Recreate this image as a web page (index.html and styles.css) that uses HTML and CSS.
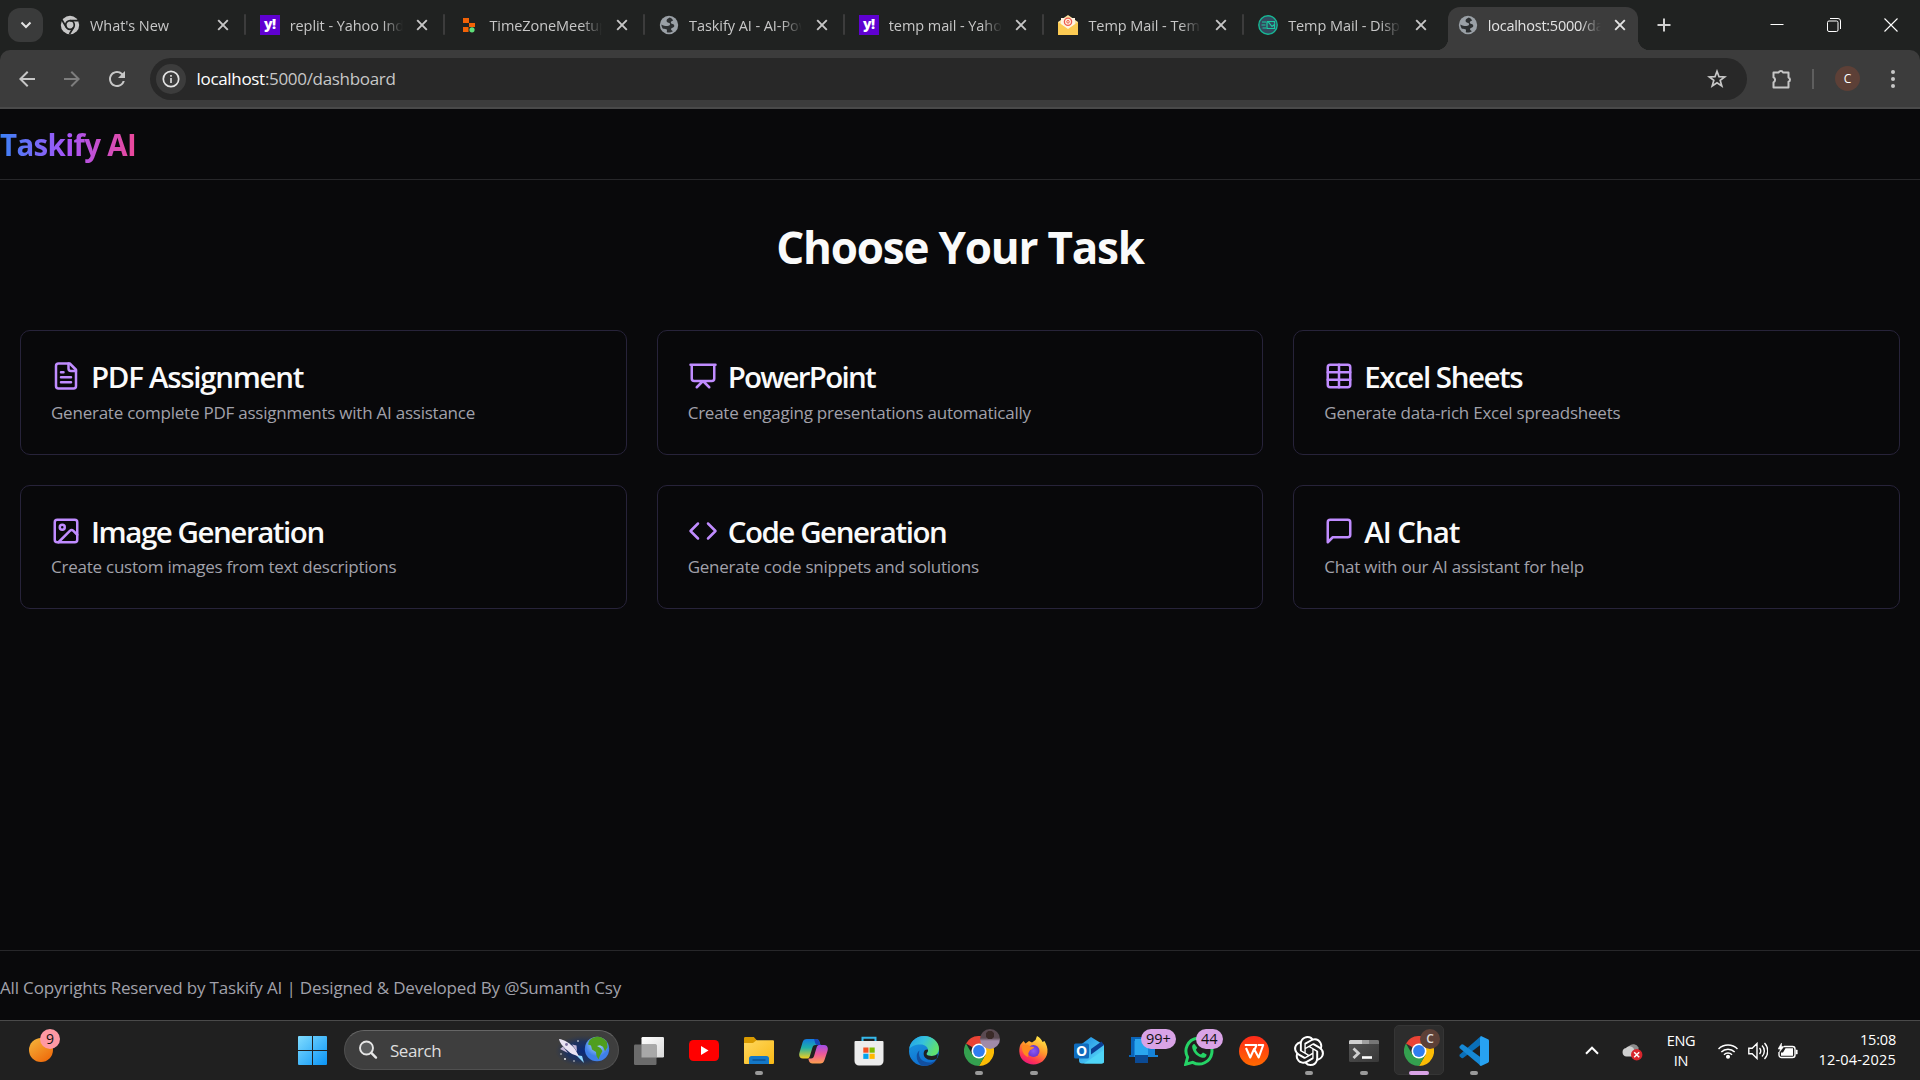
FILE: index.html
```html
<!DOCTYPE html>
<html lang="en">
<head>
<meta charset="utf-8">
<title>Taskify AI</title>
<link rel="stylesheet" href="styles.css">
</head>
<body>
<svg class="defs" aria-hidden="true">
  <defs>
    <linearGradient id="gWin" x1="0" y1="0" x2="1" y2="1"><stop offset="0" stop-color="#80dcff"/><stop offset="1" stop-color="#0a94f5"/></linearGradient>
    <linearGradient id="gOrange" x1="0" y1="0" x2=".7" y2="1"><stop offset="0" stop-color="#f5b83d"/><stop offset="1" stop-color="#ef6c0c"/></linearGradient>
    <linearGradient id="gFolder" x1="0" y1="0" x2="1" y2="1"><stop offset="0" stop-color="#ffd75e"/><stop offset="1" stop-color="#f9b915"/></linearGradient>
    <linearGradient id="gCopA" x1="0" y1="0" x2="0" y2="1"><stop offset="0" stop-color="#1279e0"/><stop offset=".45" stop-color="#1fb1a8"/><stop offset="1" stop-color="#f3cf1e"/></linearGradient>
    <linearGradient id="gCopB" x1="0" y1="0" x2="0" y2="1"><stop offset="0" stop-color="#a04de8"/><stop offset=".5" stop-color="#ee5a98"/><stop offset="1" stop-color="#fda04e"/></linearGradient>
    <linearGradient id="gEdgeTop" x1="0" y1="0" x2="1" y2=".4"><stop offset="0" stop-color="#1f9ee8"/><stop offset=".5" stop-color="#35c1dd"/><stop offset="1" stop-color="#5fe070"/></linearGradient>
    <linearGradient id="gEdge" x1="0" y1="0" x2=".4" y2="1"><stop offset="0" stop-color="#1b9de2"/><stop offset="1" stop-color="#0f6fd0"/></linearGradient>
    <linearGradient id="gFox" x1=".8" y1="0" x2=".3" y2="1"><stop offset="0" stop-color="#fff04a"/><stop offset=".45" stop-color="#ff9a2b"/><stop offset=".8" stop-color="#ff3750"/><stop offset="1" stop-color="#e8157e"/></linearGradient>
    <radialGradient id="gFoxIn"><stop offset="0" stop-color="#8b5cf6"/><stop offset="1" stop-color="#6a35d0"/></radialGradient>
    <linearGradient id="gOut" x1="0" y1="0" x2="1" y2="1"><stop offset="0" stop-color="#1b86e0"/><stop offset="1" stop-color="#5fe3fb"/></linearGradient>
    <linearGradient id="gWps" x1="0" y1="0" x2="0" y2="1"><stop offset="0" stop-color="#ff2a1a"/><stop offset="1" stop-color="#ff6a00"/></linearGradient>
    <linearGradient id="gTerm" x1="0" y1="0" x2="1" y2="1"><stop offset="0" stop-color="#555"/><stop offset="1" stop-color="#383838"/></linearGradient>
    <radialGradient id="gEarth" cx=".5" cy=".3"><stop offset="0" stop-color="#b7e0ff"/><stop offset="1" stop-color="#3f7fe8"/></radialGradient>
    <radialGradient id="gSpace"><stop offset="0" stop-color="#0b2a7a"/><stop offset=".6" stop-color="#173064" stop-opacity=".8"/><stop offset="1" stop-color="#2a3550" stop-opacity="0"/></radialGradient>
  </defs>
  <symbol id="i-close" viewBox="0 0 12 12"><path d="M1.200 1.200l9.600 9.600M10.800 1.200l-9.600 9.600" stroke="currentColor" stroke-width="1.900"/></symbol>
  <symbol id="i-globe" viewBox="0 0 20 20"><circle cx="10" cy="10" r="9.200" fill="#9aa0a6"/><path d="M10.800 2.600C8.900 3.400 7.200 4.600 7.600 6.200c.5 1.600 3.400 1.200 3.500 2.800.1 1.300-1.200 1.900-2.600 2-1.900.1-4.100-.4-6.100-1.500.1 1.700.6 3 1.500 4.200 1.400.3 3.300.1 3.900.9.500.8-.2 1.700.1 2.700 2 .5 4.400.2 6-1.100-.7-.8-2-1-1.900-2.200.2-1.200 2.700-1.300 3.200-2.600.4-1.300-.6-2-1.700-2.300-1.200-.4-2-1.100-1.500-2.300.3-.8 1.500-1 2.200-1.400-.9-1.300-2.100-2.300-3.400-2.800z" fill="#26292a" opacity=".95"/></symbol>
  <symbol id="i-chrome" viewBox="0 0 30 30">
    <path d="M15 15L2 7.500A15 15 0 0 1 28 7.500H15z" fill="#ea4335"/>
    <path d="M28 7.500A15 15 0 0 1 15 30L21.500 18.750L15 7.500z" fill="#fbbc05"/>
    <path d="M2 7.500A15 15 0 0 0 15 30L21.500 18.750L8.500 18.750z" fill="#34a04f"/>
    <circle cx="15" cy="15" r="7.500" fill="#fff"/><circle cx="15" cy="15" r="5.900" fill="#2f7df0"/>
  </symbol>
</svg>

<header class="browser">
  <div class="tabstrip">
    <button class="tab-search"><svg width="12" height="8" viewBox="0 0 12 8"><path d="M1.500 1.500L6 6l4.500-4.500" fill="none" stroke="#e3e3e3" stroke-width="2"/></svg></button>
    <div class="tabs">
      <div class="tab"><svg class="fav" viewBox="0 0 20 20"><circle cx="10" cy="10" r="9.200" fill="#c7c7c7"/><circle cx="10" cy="10" r="4.300" fill="none" stroke="#202221" stroke-width="1.700"/><path d="M10 5.700h8.500M6.300 12.200L2 5M13.700 12.200L9.500 19" stroke="#202221" stroke-width="1.700"/></svg><span class="tab-title">What's New</span><svg class="x"><use href="#i-close"/></svg></div>
      <div class="tab"><span class="fav yahoo">y!</span><span class="tab-title">replit - Yahoo India</span><svg class="x"><use href="#i-close"/></svg></div>
      <div class="tab"><svg class="fav" viewBox="0 0 20 20"><path d="M4 3h6v5H4zM10 8h6v4h-6zM4 12h5.500v5H4z" fill="#f26207"/><circle cx="13" cy="14.800" r="2.600" fill="#5fe07a"/></svg><span class="tab-title">TimeZoneMeetup</span><svg class="x"><use href="#i-close"/></svg></div>
      <div class="tab"><svg class="fav"><use href="#i-globe"/></svg><span class="tab-title">Taskify AI - AI-Powered</span><svg class="x"><use href="#i-close"/></svg></div>
      <div class="tab"><span class="fav yahoo">y!</span><span class="tab-title">temp mail - Yahoo</span><svg class="x"><use href="#i-close"/></svg></div>
      <div class="tab"><svg class="fav" viewBox="0 0 20 20"><path d="M0 7L10 0l10 7v13H0z" fill="#fbe3a0"/><path d="M3 3h14v8l-7 5-7-5z" fill="#fff3e0"/><path d="M0 7l10 7 10-7v13H0z" fill="#fccb53"/><circle cx="10" cy="6.800" r="3.600" fill="none" stroke="#ef5b4c" stroke-width="1.300"/><circle cx="10" cy="6.800" r="1.300" fill="none" stroke="#ef5b4c"/></svg><span class="tab-title">Temp Mail - Temporary</span><svg class="x"><use href="#i-close"/></svg></div>
      <div class="tab"><svg class="fav" viewBox="0 0 20 20"><circle cx="10" cy="10" r="9.200" fill="#34495e" stroke="#17b794" stroke-width="1.400"/><path d="M4 7h4M3.500 10h4M4.500 13h3.500M9 6.500v7h7.500V9.500l-2.500 2-4-5h6.500v2" fill="none" stroke="#1cc9a0" stroke-width="1.200"/></svg><span class="tab-title">Temp Mail - Disposable</span><svg class="x"><use href="#i-close"/></svg></div>
      <div class="tab active"><svg class="fav"><use href="#i-globe"/></svg><span class="tab-title">localhost:5000/dashboard</span><svg class="x"><use href="#i-close"/></svg></div>
    </div>
    <button class="new-tab"><svg width="14" height="14" viewBox="0 0 14 14"><path d="M7 .500v13M.500 7h13" stroke="#d0d0d0" stroke-width="2"/></svg></button>
    <div class="win-controls">
      <svg width="14" height="14" viewBox="0 0 14 14"><path d="M.500 6.500h13" stroke="#fff"/></svg>
      <svg width="14" height="14" viewBox="0 0 14 14" fill="none" stroke="#fff"><rect x=".500" y="3" width="10.500" height="10.500" rx="1.500"/><path d="M3 .500h8a2.500 2.500 0 0 1 2.500 2.500v8"/></svg>
      <svg width="14" height="14" viewBox="0 0 14 14"><path d="M.500 .500l13 13M13.500 .500l-13 13" stroke="#fff" stroke-width="1.100"/></svg>
    </div>
  </div>
  <div class="toolbar">
    <nav class="nav-buttons">
      <svg width="24" height="24" viewBox="0 0 24 24" fill="#c7c7c7"><path d="M20 11H7.830l5.590-5.590L12 4l-8 8 8 8 1.410-1.410L7.830 13H20v-2z"/></svg>
      <svg width="24" height="24" viewBox="0 0 24 24" fill="#7d7d7d"><path d="M4 11h12.170l-5.590-5.590L12 4l8 8-8 8-1.410-1.410L16.170 13H4v-2z"/></svg>
      <svg width="24" height="24" viewBox="0 0 24 24" fill="#c7c7c7"><path d="M17.650 6.350A7.958 7.958 0 0 0 12 4c-4.420 0-7.990 3.580-7.990 8s3.570 8 7.990 8c3.730 0 6.840-2.550 7.730-6h-2.080A5.990 5.990 0 0 1 12 18c-3.310 0-6-2.690-6-6s2.690-6 6-6c1.660 0 3.140.69 4.220 1.780L13 11h7V4l-2.350 2.350z"/></svg>
    </nav>
    <div class="omnibox">
      <span class="site-info"><svg width="18" height="18" viewBox="0 0 18 18"><circle cx="9" cy="9" r="7.700" fill="none" stroke="#e3e3e3" stroke-width="1.700"/><path d="M9 8v5M9 5v1.800" stroke="#e3e3e3" stroke-width="1.600"/></svg></span>
      <span class="url"><b>localhost</b>:5000/dashboard</span>
      <svg class="star" width="20" height="20" viewBox="0 0 20 20"><path d="M10 2.300l2 5.400 5.700.200-4.500 3.500 1.600 5.600-4.800-3.300L5.200 17l1.600-5.600L2.300 7.900l5.700-.200z" fill="none" stroke="#c7c7c7" stroke-width="1.700"/></svg>
    </div>
    <div class="actions">
      <svg width="22" height="22" viewBox="0 0 22 22"><path d="M2.500 4.500h5.200a2.300 2.300 0 0 1 4.300 0h5.500v5a2.300 2.300 0 0 1 0 4.300v5.700h-15v-5.200a2.700 2.700 0 0 0 0-4.900z" fill="none" stroke="#c7c7c7" stroke-width="2" stroke-linejoin="round"/></svg>
      <span class="bar"></span>
      <span class="avatar">C</span>
      <svg width="6" height="20" viewBox="0 0 6 20" fill="#c7c7c7"><circle cx="3" cy="3" r="2"/><circle cx="3" cy="10" r="2"/><circle cx="3" cy="17" r="2"/></svg>
    </div>
  </div>
</header>

<div class="page">
  <header class="site-header"><span class="brand">Taskify AI</span></header>
  <main class="main">
    <h1>Choose Your Task</h1>
    <div class="grid">
      <article class="card pdf">
        <h2><svg class="lucide" viewBox="0 0 24 24"><path d="M15 2H6a2 2 0 0 0-2 2v16a2 2 0 0 0 2 2h12a2 2 0 0 0 2-2V7Z"/><path d="M14 2v4a2 2 0 0 0 2 2h4M10 9H8M16 13H8M16 17H8"/></svg><span>PDF Assignment</span></h2>
        <p>Generate complete PDF assignments with AI assistance</p>
      </article>
      <article class="card slides">
        <h2><svg class="lucide" viewBox="0 0 24 24"><path d="M2 3h20M21 3v11a2 2 0 0 1-2 2H5a2 2 0 0 1-2-2V3M7 21l5-5 5 5"/></svg><span>PowerPoint</span></h2>
        <p>Create engaging presentations automatically</p>
      </article>
      <article class="card sheets">
        <h2><svg class="lucide" viewBox="0 0 24 24"><path d="M12 3v18"/><rect x="3" y="3" width="18" height="18" rx="2"/><path d="M3 9h18M3 15h18"/></svg><span>Excel Sheets</span></h2>
        <p>Generate data-rich Excel spreadsheets</p>
      </article>
      <article class="card image">
        <h2><svg class="lucide" viewBox="0 0 24 24"><rect x="3" y="3" width="18" height="18" rx="2"/><circle cx="9" cy="9" r="2"/><path d="m21 15-3.086-3.086a2 2 0 0 0-2.828 0L6 21"/></svg><span>Image Generation</span></h2>
        <p>Create custom images from text descriptions</p>
      </article>
      <article class="card code">
        <h2><svg class="lucide" viewBox="0 0 24 24"><path d="m16 18 6-6-6-6M8 6l-6 6 6 6"/></svg><span>Code Generation</span></h2>
        <p>Generate code snippets and solutions</p>
      </article>
      <article class="card chat">
        <h2><svg class="lucide" viewBox="0 0 24 24"><path d="M21 15a2 2 0 0 1-2 2H7l-4 4V5a2 2 0 0 1 2-2h14a2 2 0 0 1 2 2z"/></svg><span>AI Chat</span></h2>
        <p>Chat with our AI assistant for help</p>
      </article>
    </div>
  </main>
  <footer class="site-footer">All Copyrights Reserved by Taskify AI | Designed &amp; Developed By @Sumanth Csy</footer>
</div>

<div class="taskbar">
  <div class="widget"><svg width="24" height="24" viewBox="0 0 24 24"><circle cx="12" cy="12" r="12" fill="url(#gOrange)"/></svg><span class="badge pink">9</span></div>
  <div class="dock">
    <div class="app"><svg width="29" height="29" viewBox="0 0 29 29" fill="url(#gWin)"><path d="M1 0h13v14H0V1a1 1 0 0 1 1-1zM15 0h13a1 1 0 0 1 1 1v13H15zM0 15h14v14H1a1 1 0 0 1-1-1zM15 15h14v13a1 1 0 0 1-1 1H15z"/></svg></div>
    <div class="search">
      <svg width="20" height="20" viewBox="0 0 20 20"><circle cx="8.500" cy="8" r="6.500" fill="#5b5d5e" stroke="#e6e6e6" stroke-width="1.900"/><path d="M13.300 12.800L18 17.600" stroke="#e6e6e6" stroke-width="2.400" stroke-linecap="round"/></svg>
      <span>Search</span>
      <svg class="scene" width="60" height="34" viewBox="0 0 60 34"><ellipse cx="32" cy="18" rx="28" ry="16" fill="url(#gSpace)"/><path d="M25 22l8 8-2-7z" fill="#8fd8ff"/><path d="M8 6c5 .5 11 4 16 10l4 7.500-7-2.500C14 16 9 11 8 6z" fill="#e9e3f3"/><path d="M12 13.500l-3 2.500 8 4zM21 11.500l4.500 1 .5 6z" fill="#c4b8d8"/><circle cx="15.500" cy="11.500" r="1.400" fill="#7a6f9e"/><circle cx="27" cy="8" r=".800" fill="#fff"/><circle cx="14" cy="26" r=".900" fill="#fff"/><circle cx="23" cy="28" r=".700" fill="#fff"/><circle cx="10" cy="21" r=".700" fill="#fff"/><circle cx="46" cy="16" r="12.200" fill="url(#gEarth)"/><path d="M38 8c2-2.500 4.500-4 8-4.200 4 0 8 2 10 5.500l.5 5-2.500 4-2-4.500-3-1.500-3 .7 3.500 2 2 3-2.500 4.500-1.500 4-2-3.500-.5-4-4-2.500-1-4-3-1z" fill="#4f9e1f"/></svg>
    </div>
    <div class="app"><svg width="30" height="28" viewBox="0 0 30 28"><defs><linearGradient id="tv" x1="0" y1="0" x2="1" y2="1"><stop offset="0" stop-color="#fff"/><stop offset="1" stop-color="#d9d9d9"/></linearGradient></defs><rect x="7.500" y="0" width="22.500" height="20.500" rx="1.200" fill="url(#tv)"/><rect x="0" y="7.500" width="22.500" height="20.500" rx="1.200" fill="#6b6b6b"/><path d="M7.500 7.500h15v13h-15z" fill="#a8a8a8"/></svg></div>
    <div class="app"><svg width="30" height="21" viewBox="0 0 30 21"><rect width="30" height="21" rx="4.500" fill="#f00"/><path d="M12 6l7.500 4.500L12 15z" fill="#fff"/></svg></div>
    <div class="app run"><svg width="30" height="27" viewBox="0 0 30 27"><path d="M0 1.200A1.200 1.200 0 0 1 1.200 0h8.600L13 3.500V8H0z" fill="#d99a00"/><path d="M0 6h9l3.500-2.700H29a1 1 0 0 1 1 1V26a1 1 0 0 1-1 1H1a1 1 0 0 1-1-1z" fill="url(#gFolder)"/><path d="M5 27v-5.500a2.500 2.500 0 0 1 2.500-2.500h15a2.500 2.500 0 0 1 2.500 2.500V27z" fill="#1478c8"/><path d="M8.500 23h13" stroke="#0b4f91" stroke-width="1.400"/></svg></div>
    <div class="app"><svg width="29" height="26" viewBox="0 0 29 26"><path d="M8 1h9c2 0 3 1 3.500 3l1 3h-5c-2 0-2.600 1-3.200 3l-2.400 8c-.6 2-1.400 2.500-3.400 2.500H4c-3.200 0-4.500-2.500-3.500-6L3.500 4.500C4.200 2 5.500 1 8 1z" fill="url(#gCopA)"/><path d="M15 1h2c2 0 3 1 3.500 3l1 3h-3.500c-2-.2-2-4-3-6z" fill="#1744b8"/><path d="M21 25.500h-7.500c-2 0-3-1-3.500-2.500l-.700-2.500h2.700c2 0 2.600-1 3.200-3l2.400-8c.6-2 1.400-2.500 3.400-2.500H25c3.200 0 4.500 2.500 3.500 6L25.500 22c-.7 2.500-2 3.500-4.500 3.500z" fill="url(#gCopB)"/></svg></div>
    <div class="app"><svg width="30" height="30" viewBox="0 0 30 30"><path d="M8.500 7V1.700h13V7" fill="none" stroke="#35b8ea" stroke-width="2"/><path d="M.500 6a1 1 0 0 1 1-1h27a1 1 0 0 1 1 1v19a4.500 4.500 0 0 1-4.500 4.500H5A4.500 4.500 0 0 1 .500 25z" fill="#ececec"/><path fill="#f25022" d="M9.300 11.500h5.200v5.200H9.300z"/><path fill="#7fba00" d="M15.500 11.500h5.200v5.200h-5.200z"/><path fill="#00a4ef" d="M9.300 17.700h5.200v5.200H9.300z"/><path fill="#ffb900" d="M15.500 17.700h5.200v5.200h-5.200z"/></svg></div>
    <div class="app"><svg width="30" height="30" viewBox="0 0 30 30"><circle cx="15" cy="15" r="15" fill="url(#gEdge)"/><path d="M10.500 14.500c-1.500 5 .5 9 5 11s9 1 12-1.500C24 29 18 31 12.500 29.500 6.500 25 6.500 17 10.500 14.500z" fill="#124f9f"/><path d="M.200 13C1 5.500 7.500 0 15 0c8.500 0 15 6 15 12.500 0 5-3.500 7.500-7.500 7.500-3 0-5-1-5-2s1.500-1.500 1.500-4c0-3-3-5.500-7.500-5.500C6 8.500 2 10.500.200 13z" fill="url(#gEdgeTop)"/><path d="M17.500 18c0 1 2 2 5 2 2.600 0 4.600-.8 6-2.200.4 1.300.2 3.200-1 5.200-4 1.800-9 1.200-11.500-1.500-2-2.500-1.500-6 0-7.500 2-1 3.300-.8 3 .700-.2 1.300-1.500 2.300-1.500 3.300z" fill="#202020"/></svg></div>
    <div class="app run"><svg width="30" height="30"><use href="#i-chrome"/></svg><span class="profile photo"></span></div>
    <div class="app run"><svg width="29" height="29" viewBox="0 0 29 29"><path d="M1.500 8.500L4.500 5l2 2.500L10 5l3 1.500L16.500 4 18 0c3 1.500 4.500 3.500 5.500 6l2-1c2 3.500 3.500 7 2.900 11.500C27.500 23.500 21.500 28.500 14.500 28.500S.5 23.500.3 15.500C.2 13 .7 10.500 1.500 8.500z" fill="url(#gFox)"/><circle cx="14.500" cy="15" r="6" fill="url(#gFoxIn)"/><path d="M3 10c3-2 6-1.500 8 .5l4 .5c0 2-3.500 2-4.500 4S8 19 9.500 21C5 20 2.500 15 3 10z" fill="#ff8a1f"/></svg></div>
    <div class="app"><svg width="30" height="27" viewBox="0 0 30 27"><path d="M5 9L17 0l13 8v16a2.500 2.500 0 0 1-2.500 2.500H8A3 3 0 0 1 5 23.500z" fill="url(#gOut)"/><path d="M30 8L17 17.500V12L27.500 4.500z" fill="#0b3f94"/><path d="M30 13v11a2.500 2.500 0 0 1-2.500 2.500H10z" fill="#4fd5f7"/><rect x="0" y="6.500" width="15" height="15" rx="1.500" fill="#0f6cbd"/><text x="7.500" y="19" text-anchor="middle" class="out-o">O</text></svg></div>
    <div class="app"><svg width="30" height="27" viewBox="0 0 30 27"><path d="M2 0h18v20H0v-2h2z" fill="#0a64b8"/><path d="M5 4h21v14h3v2H5z" fill="#1583d8"/><path d="M6 2h13v24H6z" fill="#2aa6ee"/><path d="M6 18h13v8H6z" fill="#0b4a94"/></svg><span class="badge lilac">99+</span></div>
    <div class="app"><svg width="30" height="30" viewBox="0 0 30 30"><path d="M1.700 28.300l1.900-7A13 13 0 1 1 8.700 26.400z" fill="none" stroke="#25d366" stroke-width="3"/><path d="M10.500 8c-1.800 0-2.700 2-2.200 4 1 5 5.500 8.800 10 9.800 2.400.4 4.200-1 4.300-3.300l-3.600-2-2.100 2c-2.500-1-4.100-2.700-5-4.800l1.400-2z" fill="#25d366"/></svg><span class="badge lilac">44</span></div>
    <div class="app"><svg width="30" height="30" viewBox="0 0 30 30"><circle cx="15" cy="15" r="15" fill="url(#gWps)"/><path d="M5.800 9h11.700l-1.800 4.500M19 9h5.200l-4.500 12.500-4.600-8.500-3.900 8.500L7 12" fill="none" stroke="#fff" stroke-width="2.100" stroke-linejoin="round"/></svg></div>
    <div class="app run"><svg width="30" height="30" viewBox="0 0 24 24"><path fill="#fff" d="M22.282 9.821a5.985 5.985 0 0 0-.516-4.911 6.046 6.046 0 0 0-6.510-2.900A6.065 6.065 0 0 0 4.981 4.182a5.985 5.985 0 0 0-3.998 2.900 6.046 6.046 0 0 0 .743 7.097 5.980 5.980 0 0 0 .511 4.911 6.051 6.051 0 0 0 6.515 2.900A5.985 5.985 0 0 0 13.260 24a6.056 6.056 0 0 0 5.772-4.206 5.989 5.989 0 0 0 3.998-2.900 6.056 6.056 0 0 0-.748-7.073zm-9.022 12.608a4.476 4.476 0 0 1-2.876-1.041l.142-.080 4.778-2.758a.795.795 0 0 0 .393-.681v-6.737l2.020 1.169a.071.071 0 0 1 .038.052v5.583a4.504 4.504 0 0 1-4.495 4.494zm-9.661-4.125a4.471 4.471 0 0 1-.535-3.014l.142.085 4.783 2.758a.771.771 0 0 0 .781 0l5.843-3.369v2.332a.080.080 0 0 1-.033.062L9.740 19.950a4.499 4.499 0 0 1-6.141-1.646zM2.341 7.896a4.485 4.485 0 0 1 2.366-1.973V11.600a.766.766 0 0 0 .388.677l5.814 3.354-2.020 1.169a.076.076 0 0 1-.071 0l-4.830-2.787A4.504 4.504 0 0 1 2.341 7.872zm16.596 3.856L13.104 8.364 15.119 7.200a.076.076 0 0 1 .071 0l4.830 2.791a4.494 4.494 0 0 1-.677 8.104v-5.677a.790.790 0 0 0-.407-.667zm2.011-3.023l-.142-.085-4.774-2.782a.776.776 0 0 0-.785 0L9.409 9.230V6.897a.066.066 0 0 1 .028-.062l4.830-2.787a4.499 4.499 0 0 1 6.680 4.660zM8.307 12.863l-2.020-1.164a.080.080 0 0 1-.038-.057V6.074a4.499 4.499 0 0 1 7.376-3.454l-.142.081L8.704 5.459a.795.795 0 0 0-.393.681zm1.098-2.365l2.602-1.500 2.607 1.500v2.999l-2.597 1.500-2.607-1.500z"/></svg></div>
    <div class="app run"><svg width="30" height="22" viewBox="0 0 30 22"><rect width="30" height="22" rx="1.500" fill="url(#gTerm)"/><path d="M0 4V1.500A1.500 1.500 0 0 1 1.500 0H13v4z" fill="#d0d0d0"/><path d="M13 0h7v4h-7z" fill="#a0a0a0"/><path d="M20 0h8.500A1.500 1.500 0 0 1 30 1.500V4H20z" fill="#777"/><path d="M4.500 8.500l5 4.700-5 4.800" fill="none" stroke="#cfcfcf" stroke-width="2.800"/><path d="M13 17.500h10" stroke="#fff" stroke-width="2.600"/></svg></div>
    <div class="app run focused"><svg width="30" height="30"><use href="#i-chrome"/></svg><span class="profile letter">C</span></div>
    <div class="app run"><svg width="30" height="30" viewBox="0 0 30 30"><path d="M22 0v8.500L3.800 22.300 2.500 22 .500 20.300v-1.500z" fill="#0a6fb8"/><path d="M.500 10.500L2.800 8.300l1.400.1L22 21.500V30L.500 11.900z" fill="#1689d6"/><path d="M22 0l7 3.200a1.700 1.700 0 0 1 1 1.600v20.400a1.700 1.700 0 0 1-1 1.600L22 30l-1.500-1 .500-1V2z" fill="#27a2f2"/></svg></div>
  </div>
  <div class="tray">
    <svg class="chev" width="14" height="9" viewBox="0 0 14 9"><path d="M1 7.700L7 1.700l6 6" fill="none" stroke="#fff" stroke-width="2"/></svg>
    <svg class="cloud" width="21" height="18" viewBox="0 0 21 18"><path d="M7 3a6 6 0 0 1 9.500 1.500v4H7z" fill="#8d8d8d"/><path d="M4.500 13.500a4.300 4.300 0 0 1-.5-8.500C6 2.500 10 2.500 12 6l-1 7.500z" fill="#cfcfcf"/><circle cx="14.700" cy="11.700" r="5.700" fill="#d8252c"/><path d="M12.200 9.200l5 5M17.200 9.200l-5 5" stroke="#fff" stroke-width="1.500"/></svg>
    <div class="lang"><span>ENG</span><span>IN</span></div>
    <div class="status">
      <svg width="20" height="16" viewBox="0 0 20 16" fill="none" stroke="#fff" stroke-width="1.500"><path d="M.500 6a13.400 13.400 0 0 1 19 0M3.300 9a9.500 9.500 0 0 1 13.400 0M6 11.700a5.700 5.700 0 0 1 8 0"/><circle cx="10" cy="13.700" r="1.300" fill="#fff"/></svg>
      <svg width="20" height="18" viewBox="0 0 20 18" fill="none" stroke="#fff" stroke-width="1.400"><path d="M.800 6.200h3.400L9 1.500v15L4.200 11.800H.800zM11.500 6a4.200 4.200 0 0 1 0 6M14 3.500a7.600 7.600 0 0 1 0 11M16.500 1a11.500 11.500 0 0 1 0 16"/></svg>
      <svg width="20" height="16" viewBox="0 0 20 16"><path d="M6 3.500h8.500a2.500 2.500 0 0 1 2.500 2.500v6a2.500 2.500 0 0 1-2.500 2.500h-11A2.500 2.500 0 0 1 1 12V9" fill="none" stroke="#fff" stroke-width="1.400"/><path d="M7.500 5.300h7.500v7.400H3V9.500h2z" fill="#fff"/><path d="M18 7h1.300v4H18zM3.500 0L0 6h2.300L1.500 9 6 3.500H3.500z" fill="#fff" stroke="#fff" stroke-width=".500"/></svg>
    </div>
    <div class="clock"><span>15:08</span><span class="date">12-04-2025</span></div>
  </div>
</div>
</body>
</html>
```
FILE: styles.css
```css
* { box-sizing: border-box; }
body {
  margin: 0;
  width: 1920px;
  height: 1080px;
  overflow: hidden;
  display: flex;
  flex-direction: column;
  background: #09090b;
  color: #fafafa;
  font-family: "Open Sans", "Noto Sans", sans-serif;
}
svg { display: block; flex: none; }
button { border: 0; padding: 0; background: none; }
.defs { position: absolute; width: 0; height: 0; }

/* browser chrome */
.browser { flex: none; height: 109px; background: #202221; }
.tabstrip { display: flex; height: 50px; padding-left: 8px; }
.tab-search {
  width: 35px; height: 34px; margin-top: 8px;
  display: grid; place-items: center;
  border-radius: 12px; background: #3a3b3b;
}
.tabs { display: flex; margin-left: 6px; }
.tab {
  position: relative;
  display: flex; align-items: center;
  width: 199.7px; height: 43px; margin-top: 7px;
  padding: 0 0 7px 11px;
  color: #c7c7c7;
}
.tab:not(.active)::after {
  content: ""; position: absolute; right: 9px; top: 7px;
  width: 2px; height: 21px; border-radius: 1px; background: #3c3c3c;
  transform: translateX(6px);
}
.tab:nth-child(7)::after { display: none; }
.fav { width: 20px; height: 20px; flex: none; }
.yahoo {
  background: #5f01d1; color: #fff;
  font-weight: 800; font-size: 14px; line-height: 17px; text-align: center; letter-spacing: -.5px;
}
.tab-title {
  width: 113px; margin-left: 10px; padding-top: 1px;
  overflow: hidden; white-space: nowrap;
  font-size: 14.5px; line-height: 22px; letter-spacing: -.07px;
  -webkit-mask-image: linear-gradient(90deg, #000 82%, transparent 100%);
  mask-image: linear-gradient(90deg, #000 82%, transparent 100%);
}
.x { width: 12px; height: 12px; margin-left: 13.5px; }
.active { background: #3c3c3c; border-radius: 12px 12px 0 0; width: 190px; margin-left: -7px; padding-left: 10px; color: #e3e3e3; }
.active { margin-left: 1px; }
.active .tab-title { letter-spacing: -.25px; }
.active::before {
  content: ""; position: absolute; left: -12px; right: -12px; bottom: 0; height: 12px;
  background:
    radial-gradient(circle at 0 0, transparent 12px, #3c3c3c 12.5px) left / 12px 12px no-repeat,
    radial-gradient(circle at 12px 0, transparent 12px, #3c3c3c 12.5px) right / 12px 12px no-repeat;
}
.new-tab { margin-left: 19px; display: grid; place-items: center; }
.win-controls { display: flex; gap: 43px; margin-left: auto; padding: 18px 22px 0 0; }
.toolbar {
  display: flex; align-items: center; height: 59px;
  background: #3c3c3c; border-bottom: 2px solid #4a4a4a;
  border-radius: 10px 10px 0 0;
}
.nav-buttons { display: flex; gap: 21px; padding-left: 15px; width: 150px; }
.omnibox {
  flex: none; display: flex; align-items: center;
  width: 1597px; height: 42px; padding: 0 20px 0 6px;
  border-radius: 21px; background: #282828;
}
.site-info { width: 30px; height: 30px; border-radius: 50%; background: #3c3c3c; display: grid; place-items: center; }
.url { margin: 1px 0 0 10.5px; font-size: 17px; line-height: 24px; letter-spacing: -.317px; color: #c7c7c7; }
.url b { font-weight: 400; color: #fff; }
.star { margin-left: auto; }
.actions { display: flex; align-items: center; padding-left: 24px; }
.bar { width: 2px; height: 20px; margin: 0 21px 0 19px; background: #5e5e5e; }
.avatar { width: 25px; height: 25px; margin-right: 30px; border-radius: 50%; background: #5d4037; color: #fff; font-size: 12px; line-height: 25px; text-align: center; }

/* page */
.page { flex: 1; display: flex; flex-direction: column; white-space: nowrap; }
.site-header { height: 71px; padding-top: 2px; display: flex; align-items: center; border-bottom: 1px solid #27272a; }
.brand {
  font-size: 29.5px; line-height: 40px; font-weight: 700; letter-spacing: -.68px;
  background: linear-gradient(90deg, #3b82f6, #a855f7 50%, #ec4899);
  -webkit-background-clip: text; background-clip: text; color: transparent;
}
.main { flex: 1; padding: 42px 20px 0; }
.main h1 { margin: 0 0 58px; font-size: 44px; line-height: 50px; font-weight: 700; letter-spacing: -1.22px; text-align: center; }
.grid { display: grid; grid-template-columns: repeat(3, 1fr); gap: 30px; }
.card { padding: 30px; border: 1px solid #27233a; border-radius: 10px; background: #08080a; }
.card h2 { display: flex; align-items: flex-start; gap: 10px; height: 38.500px; margin: 0; font-size: 29.5px; line-height: 32px; font-weight: 600; letter-spacing: -1.45px; }
.pdf h2 { letter-spacing: -1.3px; }
.slides h2 { letter-spacing: -1.75px; }
.chat h2 { letter-spacing: -1.06px; }
.card p { margin: 0; padding-top: 1px; height: 24px; font-size: 17px; line-height: 24px; letter-spacing: -.235px; color: #a1a1aa; }
.lucide { width: 30px; height: 30px; fill: none; stroke: #c08cff; stroke-width: 2; stroke-linecap: round; stroke-linejoin: round; }
.site-footer { height: 70px; padding-top: 24px; border-top: 1px solid #27272a; font-size: 17px; line-height: 26px; letter-spacing: -.163px; color: #a1a1aa; }

/* taskbar */
.taskbar { flex: none; display: flex; height: 60px; background: #202020; border-top: 1px solid #4a4a4a; }
.widget { position: relative; width: 285px; padding: 17px 0 0 29px; }
.dock { display: flex; }
.app { position: relative; width: 55px; height: 59px; display: grid; place-items: center; }
.run::after {
  content: ""; position: absolute; left: 50%; bottom: 5px; width: 8px; height: 4px;
  margin-left: -4px; border-radius: 2px; background: #9a9a9a;
}
.focused::before { content: ""; position: absolute; inset: 4px 2.5px 5px; border-radius: 5px; background: #2d2d2d; border: 1px solid #353535; }
.focused svg { position: relative; }
.focused::after { width: 20px; margin-left: -10px; background: #d9a3e6; }
.search {
  display: flex; align-items: center; width: 275px; height: 40px; margin: 9px 2px 0 4px; padding: 0 7px 0 13px;
  border: 1px solid #505050; border-top-color: #666; border-radius: 20px; background: #3e3e3e;
  color: #dedede; font-size: 17px; letter-spacing: -.45px;
}
.search span { margin-left: 12px; }
.scene { margin-left: auto; }
.badge { position: absolute; color: #111; text-align: center; border-radius: 10px; height: 20px; line-height: 20px; font-size: 14.5px; }
.pink { left: 40px; top: 8px; width: 20px; background: #ff99a4; font-size: 14px; }
.lilac { left: 25px; top: 8px; padding: 0 5px; background: #d9a3e6; }
.profile { position: absolute; left: 29px; top: 8px; width: 20px; height: 20px; border-radius: 50%; }
.photo { background: radial-gradient(circle at 50% 30%, #3a2a28 0 4px, transparent 4.5px), linear-gradient(#5a4a52 0 45%, #a08aa8 60% 100%); }
.letter { background: #5d4037; color: #ddd; font-size: 12px; font-weight: 600; line-height: 20px; text-align: center; }
.out-o { fill: #fff; font: 700 14px "Open Sans", sans-serif; }
.tray { display: flex; align-items: center; margin-left: auto; padding-right: 24px; color: #fff; font-size: 14.500px; line-height: 20px; }
.chev { margin-right: 23px; }
.cloud { margin: 3px 23px 0 0; }
.lang { width: 30px; display: flex; flex-direction: column; align-items: center; letter-spacing: -.3px; }
.status { display: flex; align-items: center; gap: 10px; margin-left: 22px; }
.clock { width: 98px; margin-top: -2px; display: flex; flex-direction: column; align-items: flex-end; letter-spacing: -.2px; }
.date { letter-spacing: .18px; }
```
